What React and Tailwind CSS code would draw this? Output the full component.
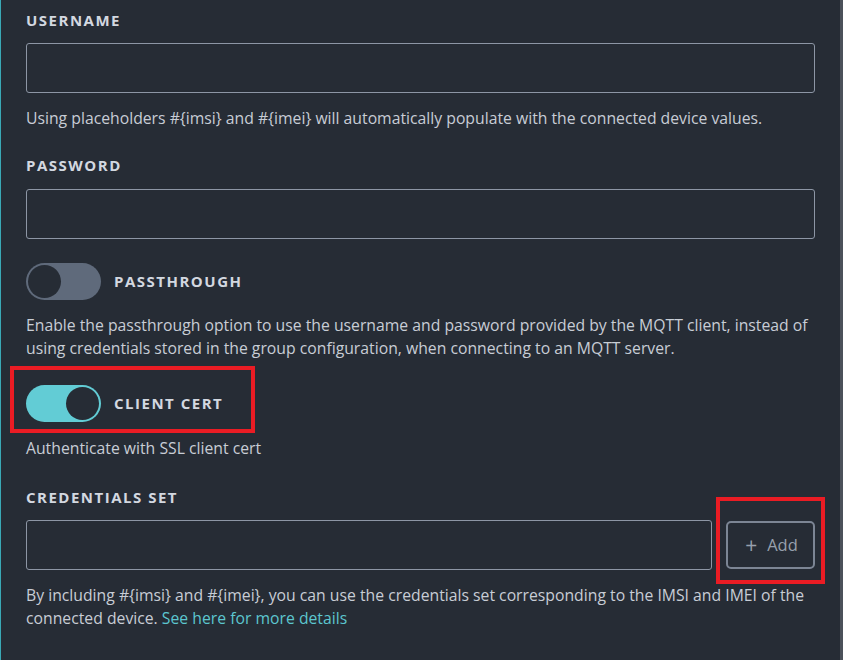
import React from "react";

const font = { fontFamily: "'Open Sans', 'Noto Sans', sans-serif" };

function Label({ children, className = "" }) {
  return (
    <div className={"text-[15px] leading-[20px] font-bold tracking-[0.1em] text-[#d3d8e0] uppercase " + className}>
      {children}
    </div>
  );
}

function Input({ className = "" }) {
  return (
    <div className={"h-[50px] rounded-[3px] border border-[#8d96a5] bg-[#262c35] " + className} />
  );
}

function Help({ children, className = "" }) {
  return <p className={"text-[15.75px] leading-[23px] text-[#c8cdd5] " + className}>{children}</p>;
}

function Toggle({ on }) {
  return (
    <div
      className={
        "w-[75px] h-[37px] rounded-full p-[2px] flex shrink-0 " +
        (on ? "bg-[#62ccd5] justify-end" : "bg-[#5f6a7b] justify-start")
      }
    >
      <div className="w-[33px] h-[33px] rounded-full bg-[#262c35]" />
    </div>
  );
}

export default function App() {
  return (
    <div className="w-[843px] h-[660px] bg-[#262c35] flex overflow-hidden" style={font}>
      <div className="w-px bg-[#3aa9b6]" />
      <div className="flex-1 pl-[25px] pr-[25px] pt-[10px] flex flex-col">
        <Label>Username</Label>
        <Input className="mt-[13px]" />
        <Help className="mt-[14px]">
          Using placeholders #{"{imsi}"} and #{"{imei}"} will automatically populate with the connected device values.
        </Help>

        <Label className="mt-[25px]">Password</Label>
        <Input className="mt-[14px]" />

        <div className="mt-[24px] flex items-center gap-[13px]">
          <Toggle on={false} />
          <span className="-mt-[2px]"><Label>Passthrough</Label></span>
        </div>
        <Help className="mt-[14px]">
          Enable the passthrough option to use the username and password provided by the MQTT client, instead of
          using credentials stored in the group configuration, when connecting to an MQTT server.
        </Help>

        <div className="mt-[25px] flex items-center gap-[13px] relative">
          <Toggle on={true} />
          <span className="-mt-[2px]"><Label>Client cert</Label></span>
          <div className="absolute left-[-16px] top-[-19px] w-[245px] h-[67px] border-[4px] border-[#ea1c24]" />
        </div>
        <Help className="mt-[15px]">Authenticate with SSL client cert</Help>

        <Label className="mt-[27px]">Credentials set</Label>
        <div className="mt-[13px] flex gap-[14px]">
          <Input className="flex-1" />
          <div className="relative">
            <button className="w-[89px] h-[48px] mt-[1px] rounded-[5px] border-2 border-[#7c8594] text-[#97a0ad] text-[16.5px] flex items-center justify-center gap-[10px] pl-[2px]">
              <span className="text-[21px] leading-none">+</span>
              <span>Add</span>
            </button>
            <div className="absolute left-[-10px] top-[-23px] w-[109px] h-[87px] border-[4px] border-[#ea1c24]" />
          </div>
        </div>
        <Help className="mt-[14px]">
          By including #{"{imsi}"} and #{"{imei}"}, you can use the credentials set corresponding to the IMSI and IMEI of the
          connected device. <span className="text-[#5cc6cf]">See here for more details</span>
        </Help>
      </div>
      <div className="w-[3px] bg-[#4b515a]" />
    </div>
  );
}
